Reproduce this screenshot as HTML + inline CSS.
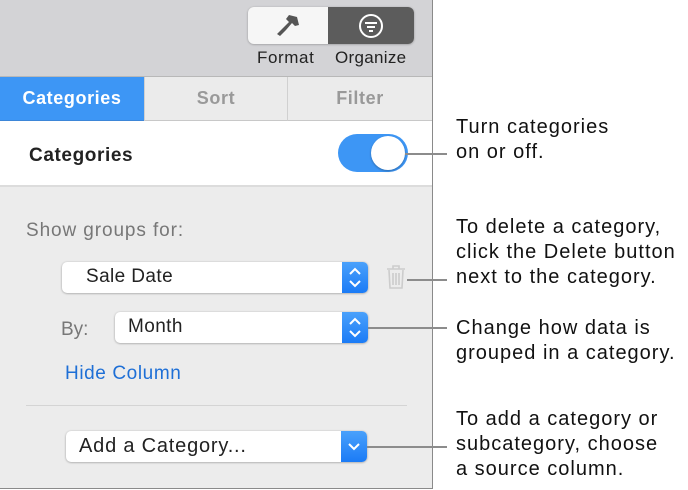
<!DOCTYPE html>
<html><head><style>
*{box-sizing:border-box;margin:0;padding:0}
body{width:688px;height:490px;background:#fff;font-family:"Liberation Sans",sans-serif;position:relative;overflow:hidden}
.abs{position:absolute}
.panel{left:0;top:0;width:433px;height:489px;background:#ececec;border-right:1px solid #8a8a8a;border-bottom:1px solid #8a8a8a}
.top{left:0;top:0;width:432px;height:77px;background:#d3d3d6;border-bottom:1px solid #b8b8b8}
.tab{top:77px;height:44px;font-size:18px;font-weight:bold;text-align:center;line-height:43px;color:#999;border-bottom:1px solid #c8c8c8;background:#ebebeb;letter-spacing:0.6px}
.sel{border-radius:5px;background:#fff;box-shadow:0 0.5px 2px rgba(0,0,0,.35);font-size:19px;color:#222;line-height:30px;letter-spacing:0.4px}
.arr{position:absolute;right:0;top:0;bottom:0;width:26px;background:linear-gradient(#4aa1fb,#1b7bf6);border-radius:0 5px 5px 0}
.line{height:2px;background:#8c8c8c}
.ann{font-size:20px;color:#111;line-height:25px;letter-spacing:1px}
</style></head><body>
<div class="abs panel"></div>
<div class="abs top"></div>
<div class="abs" style="left:248px;top:7px;width:166px;height:37px;border-radius:6px;background:#f6f6f6;box-shadow:0 0.5px 2px rgba(0,0,0,.3)"></div>
<div class="abs" style="left:328px;top:7px;width:86px;height:37px;border-radius:0 6px 6px 0;background:#5c5c5c"></div>
<svg class="abs" style="left:275px;top:13px" width="30" height="26" viewBox="0 0 30 26"><path d="M14 2l8 2 2 8-4 1-3-3-6 7-6 6-3-2 6-6 6-6-3-3z" fill="#555"/></svg>
<svg class="abs" style="left:358px;top:13px" width="26" height="26" viewBox="0 0 26 26"><circle cx="13" cy="13" r="11" fill="none" stroke="#fff" stroke-width="2"/><path d="M7 10h12M9 14h8M11 18h4" stroke="#fff" stroke-width="2"/></svg>
<div class="abs" style="left:257px;top:48px;font-size:17px;color:#222;letter-spacing:0.6px">Format</div>
<div class="abs" style="left:335px;top:48px;font-size:17px;color:#222;letter-spacing:0.3px">Organize</div>
<div class="abs tab" style="left:0;width:144px;background:#3d96f5;color:#fff;border-bottom-color:#3d86d8">Categories</div>
<div class="abs tab" style="left:144px;width:143px;border-left:1px solid #d0d0d0">Sort</div>
<div class="abs tab" style="left:287px;width:145px;border-left:1px solid #d0d0d0">Filter</div>
<div class="abs" style="left:0;top:121px;width:432px;height:66px;background:#fff;border-bottom:2px solid #dcdcdc"></div>
<div class="abs" style="left:29px;top:145px;font-size:19px;font-weight:bold;color:#222;letter-spacing:0.6px">Categories</div>
<div class="abs" style="left:338px;top:134px;width:70px;height:38px;border-radius:19px;background:#3d96f5"></div>
<div class="abs" style="left:371px;top:136px;width:34px;height:34px;border-radius:50%;background:#fff;box-shadow:0 1px 2px rgba(0,0,0,.3)"></div>
<div class="abs line" style="left:405px;top:153px;width:42px"></div>
<div class="abs ann" style="left:456px;top:115px">Turn categories<br>on or off.</div>
<div class="abs" style="left:26px;top:220px;font-size:19px;color:#777;letter-spacing:0.9px">Show groups for:</div>
<div class="abs sel" style="left:62px;top:262px;width:306px;height:31px;padding-left:24px">Sale Date<div class="arr"><svg width="26" height="31" viewBox="0 0 26 31"><path d="M8 12l5-5 5 5M8 19l5 5 5-5" fill="none" stroke="#fff" stroke-width="2"/></svg></div></div>
<svg class="abs" style="left:385px;top:264px" width="22" height="26" viewBox="0 0 22 26"><path d="M2 5h18M8 5V2h6v3M4 6l1 18h12l1-18M8 9v12M11 9v12M14 9v12" fill="none" stroke="#ccc" stroke-width="1.6"/></svg>
<div class="abs line" style="left:407px;top:279px;width:40px"></div>
<div class="abs ann" style="left:456px;top:215px">To delete a category,<br>click the Delete button<br>next to the category.</div>
<div class="abs" style="left:61px;top:319px;font-size:19px;color:#777">By:</div>
<div class="abs sel" style="left:115px;top:312px;width:253px;height:31px;padding-left:13px">Month<div class="arr"><svg width="26" height="31" viewBox="0 0 26 31"><path d="M8 12l5-5 5 5M8 19l5 5 5-5" fill="none" stroke="#fff" stroke-width="2"/></svg></div></div>
<div class="abs line" style="left:368px;top:327px;width:79px"></div>
<div class="abs ann" style="left:456px;top:316px">Change how data is<br>grouped in a category.</div>
<div class="abs" style="left:65px;top:363px;font-size:19px;color:#1e6fd6;letter-spacing:0.6px">Hide Column</div>
<div class="abs" style="left:26px;top:405px;width:381px;height:1px;background:#d4d4d4"></div>
<div class="abs sel" style="left:66px;top:431px;width:301px;height:31px;padding-left:13px;font-size:20px;letter-spacing:0.8px">Add a Category...<div class="arr"><svg width="26" height="31" viewBox="0 0 26 31"><path d="M8 13l5 5 5-5" fill="none" stroke="#fff" stroke-width="2"/></svg></div></div>
<div class="abs line" style="left:367px;top:446px;width:80px"></div>
<div class="abs ann" style="left:456px;top:407px">To add a category or<br>subcategory, choose<br>a source column.</div>
</body></html>
